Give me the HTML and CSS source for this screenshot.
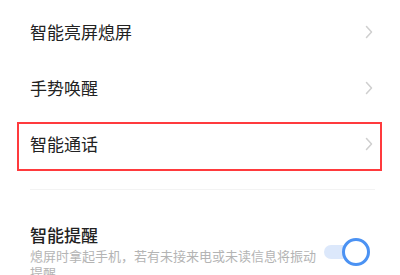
FILE: index.html
```html
<!DOCTYPE html>
<html lang="zh">
<head>
<meta charset="utf-8">
<link rel="stylesheet" href="styles.css">
</head>
<body>
<div class="list">
  <div class="row">
    <span class="label">智能亮屏熄屏</span>
    <svg class="chev" width="8" height="14" viewBox="0 0 8 14"><polyline points="1.5,1.5 6.5,7 1.5,12.5" fill="none" stroke="#cfcfcf" stroke-width="1.5" stroke-linecap="round" stroke-linejoin="round"/></svg>
  </div>
  <div class="row">
    <span class="label">手势唤醒</span>
    <svg class="chev" width="8" height="14" viewBox="0 0 8 14"><polyline points="1.5,1.5 6.5,7 1.5,12.5" fill="none" stroke="#cfcfcf" stroke-width="1.5" stroke-linecap="round" stroke-linejoin="round"/></svg>
  </div>
  <div class="row highlight">
    <span class="label">智能通话</span>
    <svg class="chev" width="8" height="14" viewBox="0 0 8 14"><polyline points="1.5,1.5 6.5,7 1.5,12.5" fill="none" stroke="#cfcfcf" stroke-width="1.5" stroke-linecap="round" stroke-linejoin="round"/></svg>
    <div class="mark"></div>
  </div>
</div>
<div class="divider"></div>
<div class="section">
  <div class="text">
    <div class="title">智能提醒</div>
    <div class="sub">熄屏时拿起手机，若有未接来电或未读信息将振动提醒</div>
  </div>
  <div class="toggle">
    <div class="track"></div>
    <div class="thumb"></div>
  </div>
</div>
</body>
</html>
```
FILE: styles.css
```css
html, body {
  margin: 0;
  padding: 0;
  background: #ffffff;
}
body {
  font-family: "Noto Sans CJK SC", "Noto Sans", sans-serif;
  color: #222222;
  overflow: hidden;
}
.list {
  padding-top: 4px;
}
.row {
  height: 56px;
  display: flex;
  align-items: center;
  justify-content: space-between;
  padding: 0 27px 0 30px;
}
.label {
  font-size: 17px;
  line-height: 24px;
}
.chev {
  display: block;
}
.highlight {
  position: relative;
}
.mark {
  position: absolute;
  top: 6px;
  left: 17px;
  right: 18px;
  bottom: 1px;
  border: 2px solid #ff3a3d;
}
.divider {
  margin: 17px 25px 0 30px;
  height: 1px;
  background: #f3f3f3;
}
.section {
  margin-top: 33px;
  padding: 0 30px;
  display: flex;
  align-items: center;
  gap: 6px;
}
.text {
  flex: 1;
}
.title {
  font-size: 17px;
  line-height: 24px;
  font-weight: 500;
}
.sub {
  font-size: 13px;
  line-height: 17px;
  color: #b4b4b4;
}
.toggle {
  position: relative;
  width: 46px;
  height: 28px;
  flex: none;
}
.track {
  position: absolute;
  left: 0;
  top: 7px;
  width: 36px;
  height: 14px;
  border-radius: 7px;
  background: #dce8fb;
}
.thumb {
  position: absolute;
  right: 0;
  top: 0;
  width: 22px;
  height: 22px;
  border-radius: 50%;
  border: 3px solid #4b92f3;
  background: #ffffff;
}
```
